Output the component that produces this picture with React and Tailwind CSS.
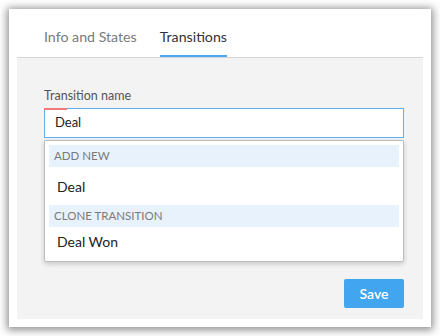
export default function App() {
  return (
    <div className="w-[440px] h-[336px] bg-white pt-[9px] px-[9px]" style={{ fontFamily: 'Lato, "Open Sans", sans-serif' }}>
      <div className="h-[318px] bg-white shadow-[0_1px_8px_2px_rgba(0,0,0,0.45)] px-[8px] pb-[8px] flex flex-col">
        <div className="h-[48px] flex items-end pl-[27px] gap-[23px] text-[14.2px]">
          <div className="pb-[9px] text-[#7a7a7a] border-b-[2px] border-transparent leading-[18px]">Info and States</div>
          <div className="pb-[9px] text-[#333] border-b-[2px] border-[#4aa8f0] leading-[18px]">Transitions</div>
        </div>
        <div className="flex-1 bg-[#f3f3f3] border-t border-[#d6d6d6] pl-[27px] pr-[19px] flex flex-col">
          <div className="mt-[30px] text-[12.5px] text-[#555] leading-[16px]">Transition name</div>
          <div className="relative mt-[4px] h-[30px] bg-white border border-[#5eb0f2] flex items-center pl-[10px] text-[13px] text-[#222]">
            <div className="absolute left-[-1px] top-[-1px] w-[23px] h-[2px] bg-[#f07a7a]" />
            Deal
          </div>
          <div className="mt-[2px] bg-white border border-[#bdbdbd] rounded-b-[2px] shadow-[0_2px_5px_rgba(0,0,0,0.18)] px-[4px] pt-[4px] pb-[5px]">
            <div className="h-[22px] bg-[#e8f2fd] flex items-center pl-[5px] text-[11.5px] text-[#7a7a7a] uppercase">Add new</div>
            <div className="h-[38px] flex items-center pl-[8px] text-[14px] text-[#222]">Deal</div>
            <div className="h-[22px] bg-[#e8f2fd] flex items-center pl-[5px] text-[11.5px] text-[#7a7a7a] uppercase">Clone transition</div>
            <div className="h-[29px] flex items-center pl-[8px] text-[14px] text-[#222]">Deal Won</div>
          </div>
          <div className="mt-[17px] flex justify-end">
            <button className="w-[60px] h-[29px] bg-[#42a5ef] rounded-[2px] text-white text-[14px] font-semibold">Save</button>
          </div>
        </div>
      </div>
    </div>
  );
}
